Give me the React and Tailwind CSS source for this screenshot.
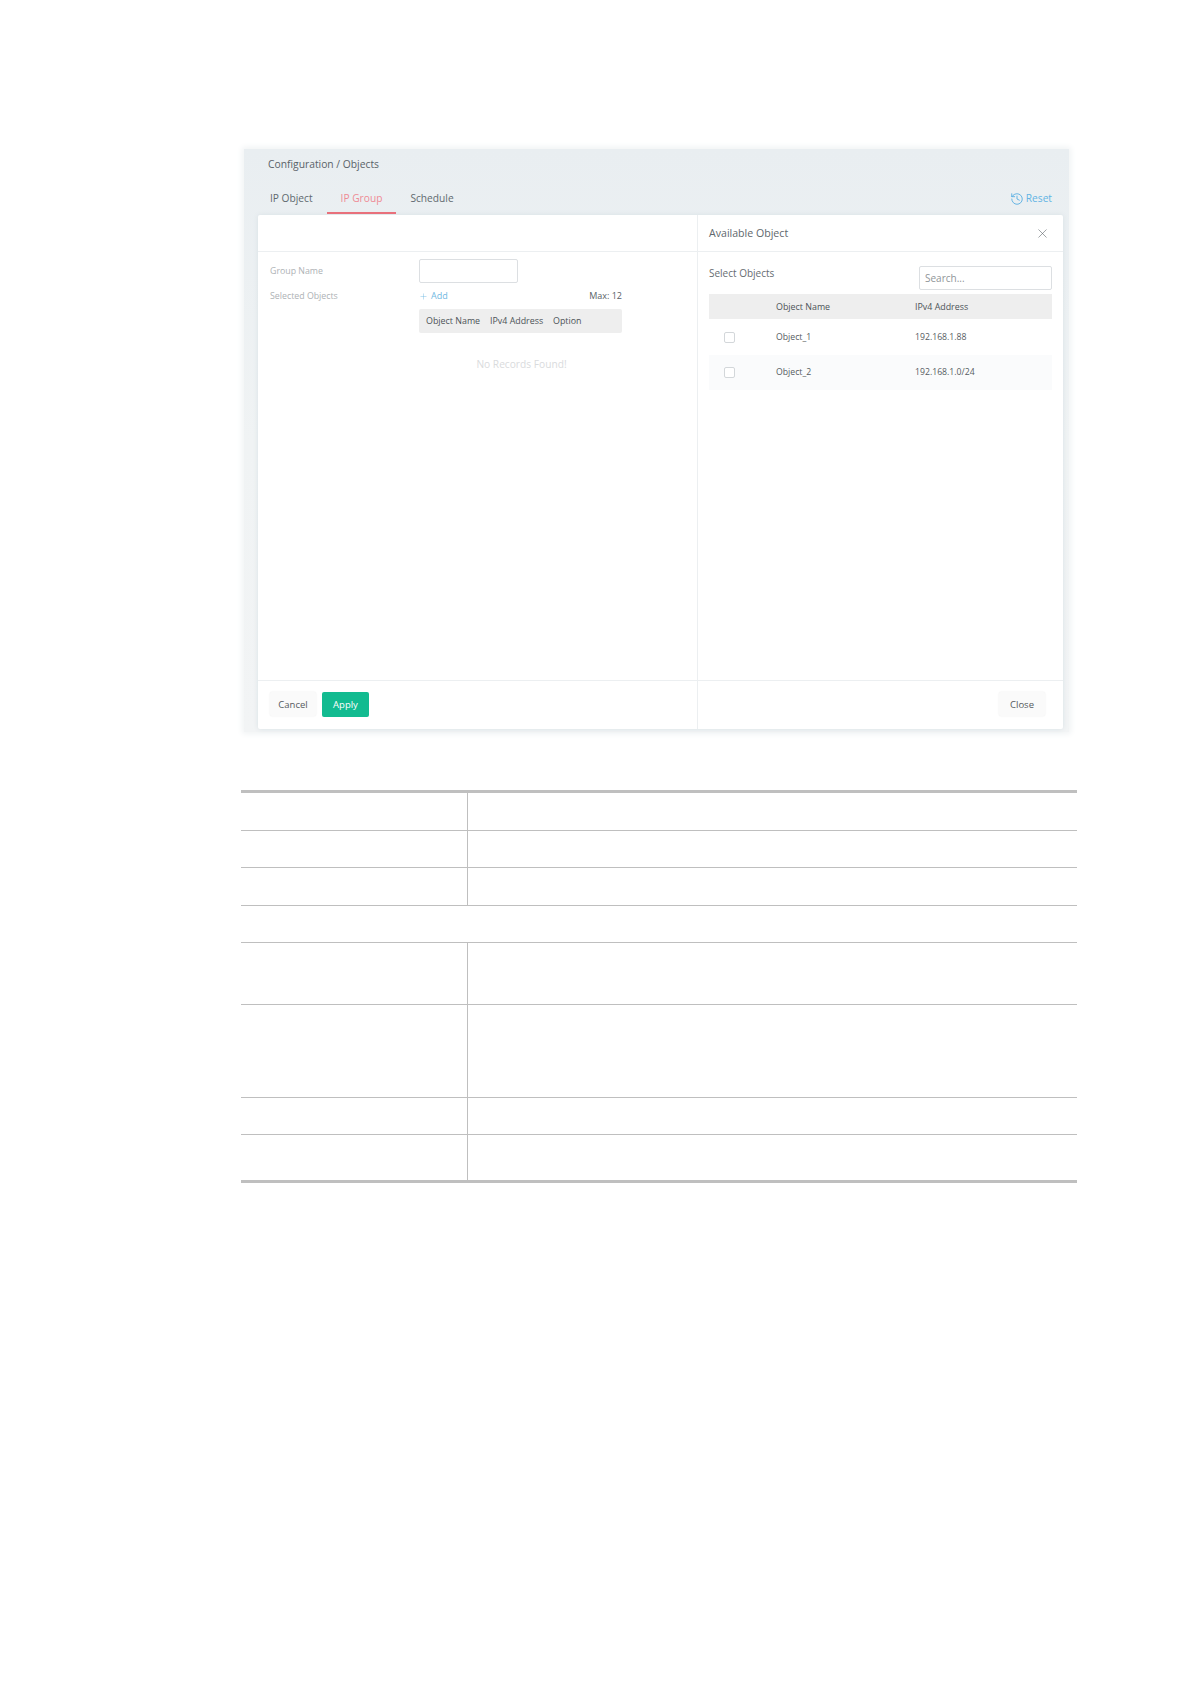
import React from "react";
import { History, Plus, X } from "lucide-react";

const tableRows = [
  { h: "h-[38px]", split: true },
  { h: "h-[37px]", split: true },
  { h: "h-[38px]", split: true },
  { h: "h-[37px]", split: false },
  { h: "h-[62px]", split: true },
  { h: "h-[93px]", split: true },
  { h: "h-[37px]", split: true },
  { h: "h-[45px]", split: true, last: true },
];

const objects = [
  { name: "Object_1", ip: "192.168.1.88", bg: "bg-white" },
  { name: "Object_2", ip: "192.168.1.0/24", bg: "bg-[#fafbfc]" },
];

const Tab = ({ label, active }) => (
  <div
    className={`h-[30px] px-[14px] pt-[5px] leading-[18px] border-b-2 text-[10.2px] ${
      active ? "border-[#e8707b] text-[#ef8a94]" : "border-transparent text-[#60696f]"
    }`}
  >
    {label}
  </div>
);

const Btn = ({ children }) => (
  <button className="w-[46px] h-[24px] pt-[2px] rounded-[2px] bg-[#fafafa] shadow-[0_0_2px_rgba(0,0,0,0.08)] text-[9.5px] text-[#555b60]">
    {children}
  </button>
);

export default function App() {
  return (
    <div className="w-[1190px] h-[1684px] bg-white font-['Open_Sans',sans-serif] pt-[149px]">
      {/* screenshot of the router page */}
      <div className="ml-[244px] w-[825px] h-[583px] pl-[14px] pr-[6px] pt-[7px] bg-linear-to-b from-[#e9eef1] via-[#f0f3f4] to-[#f2f4f5] shadow-[0_0_6px_2px_#f0f3f4]">
        <div className="h-4 leading-4 pl-[10px] text-[10.3px] text-[#596268]">
          Configuration / Objects
        </div>

        <div className="mt-[12px] mb-px flex justify-between">
          <div className="flex -ml-[2px]">
            <Tab label="IP Object" />
            <Tab label="IP Group" active />
            <Tab label="Schedule" />
          </div>
          <div className="flex items-center gap-[2px] pr-[11px] text-[10.2px] text-[#62b4e4]">
            <History size={14} strokeWidth={1.4} className="text-[#4aa8e0]" />
            <span>Reset</span>
          </div>
        </div>

        <div className="h-[514px] rounded-[2px] bg-white shadow-[0_0_5px_#d8e0e4] flex">
          {/* left side */}
          <div className="w-[440px] border-r border-[#eceff1] flex flex-col">
            <div className="h-[37px] border-b border-[#eceff1]" />
            <div className="flex-1 pl-[12px] pt-[7px]">
              <div className="flex">
                <div className="w-[149px] pt-[5px] text-[8.8px] leading-[14px] text-[#aeb2b5]">Group Name</div>
                <div className="w-[99px] h-[24px] rounded-[2px] border border-[#dcdfe2] bg-white" />
              </div>
              <div className="flex mt-[6px]">
                <div className="w-[149px] text-[8.8px] leading-[14px] text-[#aeb2b5]">Selected Objects</div>
                <div className="w-[203px]">
                  <div className="h-[14px] flex justify-between items-center text-[9px]">
                    <span className="flex items-center gap-[3px] text-[#72b9e2]">
                      <Plus size={9} strokeWidth={1.2} />
                      Add
                    </span>
                    <span className="text-[#5a6166]">Max: 12</span>
                  </div>
                  <div className="mt-[6px] h-[24px] rounded-[2px] bg-[#eeeeee] pl-[7px] flex items-center text-[8.9px] text-[#4d5358]">
                    <span className="w-[64px]">Object Name</span>
                    <span className="w-[63px]">IPv4 Address</span>
                    <span>Option</span>
                  </div>
                  <div className="mt-[23px] ml-[2px] text-center text-[10.2px] leading-[16px] text-[#d9dbdd]">No Records Found!</div>
                </div>
              </div>
            </div>
            <div className="h-[49px] border-t border-[#eceff1] pl-[12px] pt-[11px] flex gap-[6px]">
              <Btn>Cancel</Btn>
              <button className="w-[47px] h-[25px] pt-[2px] rounded-[2px] bg-[#12bb90] text-[9.5px] text-white">Apply</button>
            </div>
          </div>

          {/* right side */}
          <div className="flex-1 flex flex-col">
            <div className="h-[37px] border-b border-[#eceff1] pl-[11px] pr-[13px] flex items-center justify-between text-[10.6px] text-[#60676c]">
              <span className="pt-[2px]">Available Object</span>
              <X size={15} strokeWidth={0.9} className="text-[#555c62]" />
            </div>
            <div className="flex-1 px-[11px] pt-[14px]">
              <div className="flex justify-between">
                <span className="text-[10px] leading-[15px] text-[#666c71]">Select Objects</span>
                <div className="w-[133px] h-[24px] pl-[5px] rounded-[2px] border border-[#dcdfe2] text-[10px] leading-[22px] text-[#8f9599]">
                  Search...
                </div>
              </div>
              <div className="mt-[4px] h-[25px] bg-[#eeeeee] grid grid-cols-[67px_139px_1fr] items-center text-[8.9px] text-[#4d5358]">
                <span />
                <span>Object Name</span>
                <span>IPv4 Address</span>
              </div>
              {objects.map((o, i) => (
                <div
                  key={o.name}
                  className={`grid grid-cols-[67px_139px_1fr] items-center text-[8.7px] text-[#565c61] ${o.bg} ${
                    i === 0 ? "h-[36px]" : "h-[35px]"
                  }`}
                >
                  <span className="ml-[15px] w-[11px] h-[11px] rounded-[2px] border border-[#d3d7da] bg-white" />
                  <span className={i === 0 ? "pt-px" : ""}>{o.name}</span>
                  <span className={i === 0 ? "pt-px" : ""}>{o.ip}</span>
                </div>
              ))}
            </div>
            <div className="h-[49px] border-t border-[#eceff1] pr-[18px] pt-[11px] flex justify-end">
              <Btn>Close</Btn>
            </div>
          </div>
        </div>
      </div>

      {/* parameter table, cells are blank in the picture */}
      <div className="ml-[241px] mt-[58px] w-[836px] border-t-[3px] border-b-[3px] border-[#bfbfbf]">
        {tableRows.map((row, i) => (
          <div key={i} className={`${row.h} flex ${row.last ? "" : "border-b border-[#bfbfbf]"}`}>
            <div className={`w-[227px] ${row.split ? "border-r border-[#bfbfbf]" : ""}`} />
          </div>
        ))}
      </div>
    </div>
  );
}
